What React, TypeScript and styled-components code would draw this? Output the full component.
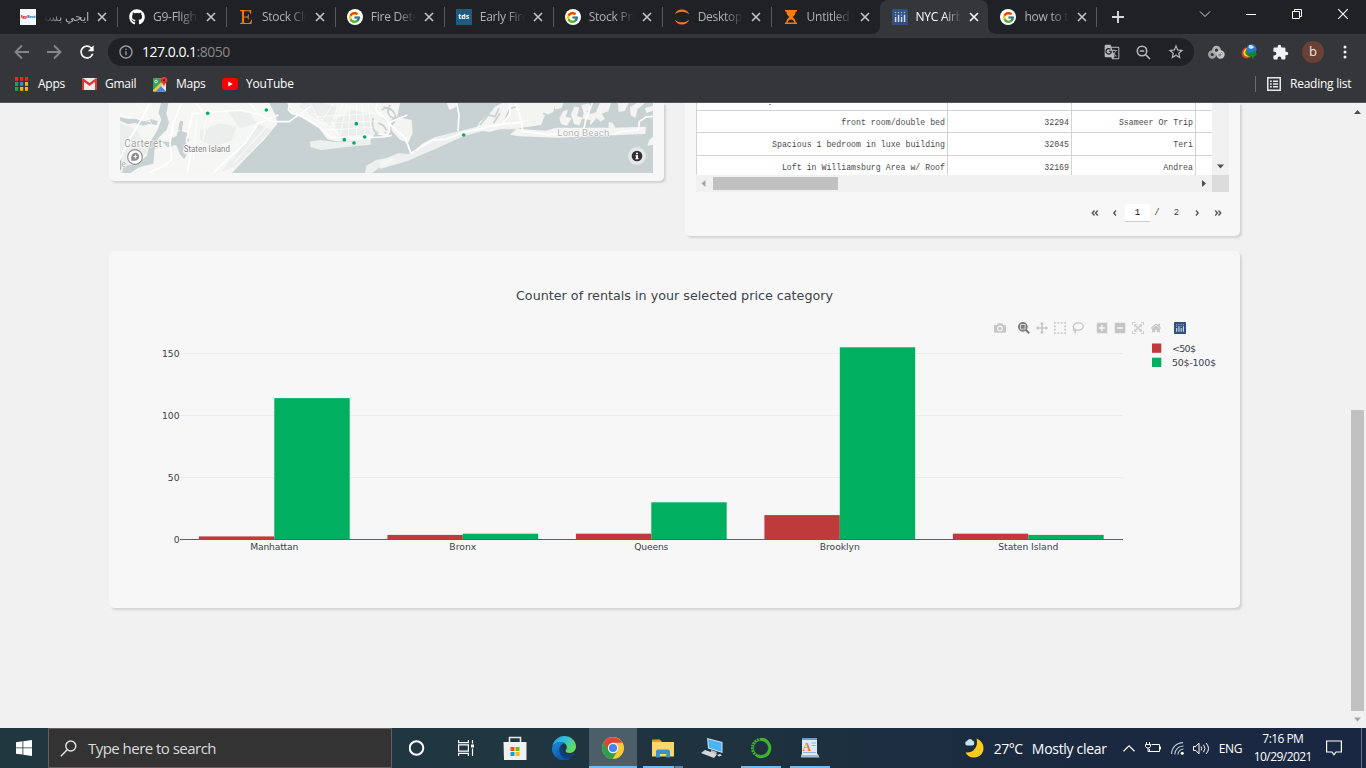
import React from "react";
import styled, { createGlobalStyle } from "styled-components";
import { FaGithub, FaEtsy } from "react-icons/fa";
import { FcGoogle } from "react-icons/fc";
import { MdExtension, MdGTranslate, MdRefresh, MdStarBorder, MdInfoOutline } from "react-icons/md";

const UI = `"Open Sans", "Noto Sans", sans-serif`;

const Global = createGlobalStyle`
  * { box-sizing: border-box; }
  html, body { margin: 0; padding: 0; overflow: hidden; }
  body { font-family: ${UI}; }
  svg { display: block; flex: none; }
`;

const Screen = styled.div`
  width: 1366px;
  height: 768px;
  display: flex;
  flex-direction: column;
  overflow: hidden;
  background: #f1f1f1;
`;

/* ---------- browser chrome ---------- */

const TabStrip = styled.div`
  height: 34px;
  flex: none;
  display: flex;
  padding-left: 8px;
  background: #202124;
`;

const TabBox = styled.div<{ $active?: boolean; $line?: boolean }>`
  width: 108.95px;
  height: 34px;
  position: relative;
  display: flex;
  align-items: center;
  padding-left: 12px;
  background: ${(p) => (p.$active ? "#35363a" : "transparent")};
  border-radius: 8px 8px 0 0;
  &::before {
    content: "";
    display: ${(p) => (p.$line ? "block" : "none")};
    position: absolute;
    left: 0;
    top: 7px;
    width: 1px;
    height: 20px;
    background: #55575b;
  }
`;

const TabFoot = styled.svg<{ $side: "left" | "right" }>`
  position: absolute;
  bottom: 0;
  ${(p) => p.$side}: -8px;
`;

const Favicon = styled.div`
  width: 16px;
  height: 16px;
  display: flex;
  align-items: center;
  justify-content: center;
`;

const GoogleDisc = styled(Favicon)`
  border-radius: 50%;
  background: #fff;
`;

const TdsBadge = styled(Favicon)`
  background: #1e5b7e;
  color: #fff;
  font: 700 7px/16px "Open Sans", sans-serif;
  padding-bottom: 1px;
`;

const EgyBadge = styled(Favicon)`
  background: #f5f6f8;
  color: #e3232f;
  font: 800 4px/16px "Open Sans", sans-serif;
  letter-spacing: -0.2px;
  b {
    color: #2c7fc4;
  }
`;

const TabTitle = styled.div<{ $active?: boolean; $rtl?: boolean }>`
  width: 45px;
  margin-left: 8px;
  height: 20px;
  line-height: 19px;
  font-size: 12px;
  letter-spacing: -0.25px;
  white-space: nowrap;
  overflow: hidden;
  color: ${(p) => (p.$active ? "#fff" : "#aeb1b6")};
  direction: ${(p) => (p.$rtl ? "rtl" : "ltr")};
  mask-image: linear-gradient(to ${(p) => (p.$rtl ? "left" : "right")}, #000 60%, transparent 100%);
`;

const TabClose = styled.div`
  margin-left: 8px;
`;

const NewTab = styled.div<{ $w: number }>`
  width: ${(p) => p.$w}px;
  height: 34px;
  position: relative;
  display: flex;
  align-items: center;
  padding-left: 15px;
  &::before {
    content: "";
    position: absolute;
    left: -1.500px;
    top: 7px;
    width: 1px;
    height: 20px;
    background: #55575b;
  }
`;

const WindowButtons = styled.div`
  height: 28px;
  display: flex;
  align-items: center;
`;

const WindowButton = styled.div`
  width: 46px;
  display: flex;
  justify-content: center;
`;

const Toolbar = styled.div`
  height: 36px;
  flex: none;
  display: flex;
  align-items: center;
  padding-left: 13px;
  background: #35363a;
`;

const NavButton = styled.div`
  width: 32px;
  display: flex;
  align-items: center;
`;

const Omnibox = styled.div`
  width: 1086px;
  height: 28px;
  margin-left: -1px;
  border-radius: 14px;
  background: #202124;
  display: flex;
  align-items: center;
  padding: 0 9px 0 10px;
  color: #9aa0a6;
`;

const Address = styled.div`
  flex: 1;
  margin-left: 8px;
  font-size: 14px;
  line-height: 20px;
  letter-spacing: -0.5px;
  color: #85898e;
  span {
    color: #fff;
  }
`;

const OmniIcons = styled.div`
  display: flex;
  gap: 16px;
  align-items: center;
  color: #b5b8bc;
`;

const ExtIcons = styled.div`
  display: flex;
  align-items: center;
  margin-left: 14px;
  gap: 15.700px;
`;

const Avatar = styled.div`
  width: 22px;
  height: 22px;
  margin: 0 -3px;
  border-radius: 50%;
  background: #6b4036;
  color: #f0e8e6;
  font-size: 13px;
  line-height: 20px;
  text-align: center;
`;

const Bookmarks = styled.div`
  height: 33px;
  flex: none;
  display: flex;
  align-items: center;
  padding: 0 14px 4px 15px;
  background: #35363a;
  border-bottom: 1px solid #56575b;
  color: #fff;
`;

const Bookmark = styled.div<{ $w: number; $gap: number }>`
  width: ${(p) => p.$w}px;
  display: flex;
  align-items: center;
  gap: ${(p) => p.$gap}px;
  font-size: 12px;
  line-height: 16px;
  letter-spacing: -0.24px;
  white-space: nowrap;
`;

const ReadingList = styled(Bookmark)`
  margin-left: auto;
  padding-left: 11px;
  border-left: 1px solid #6a6b6f;
`;

/* ---------- page ---------- */

const Viewport = styled.div`
  height: 625px;
  flex: none;
  display: flex;
  overflow: hidden;
`;

const Page = styled.div`
  flex: 1;
  padding-left: 109px;
  background: #f1f1f1;
`;

const TopRow = styled.div`
  display: flex;
  align-items: flex-start;
  gap: 21px;
  height: 148px;
`;

const Card = styled.div<{ $w: number; $h: number; $cut?: boolean }>`
  position: relative;
  width: ${(p) => p.$w}px;
  height: ${(p) => p.$h}px;
  background: #f7f7f7;
  border-radius: ${(p) => (p.$cut ? "0 0 5px 5px" : "5px")};
  box-shadow: 2px 2px 2px lightgrey;
`;

const MapCard = styled(Card)`
  padding-left: 11px;
`;

const TableCard = styled(Card)`
  padding-left: 11px;
`;

const TableFrame = styled.div`
  width: 533px;
  height: 89px;
  display: grid;
  grid-template-columns: 516px 17px;
  grid-template-rows: 72px 17px;
`;

const Rows = styled.div`
  overflow: hidden;
  background: #fff;
`;

const Row = styled.div<{ $h: number }>`
  display: grid;
  grid-template-columns: 252px 124px 124px 16px;
  height: ${(p) => p.$h}px;
  border-bottom: 1px solid #d3d3d3;
`;

const Cell = styled.div<{ $first?: boolean }>`
  border-right: 1px solid #d3d3d3;
  border-left: ${(p) => (p.$first ? "1px solid #d3d3d3" : "0")};
  padding: 2px 2px 0 0;
  display: flex;
  align-items: center;
  justify-content: flex-end;
  white-space: nowrap;
  font: 8.24px/10px "Liberation Mono", monospace;
  color: #4a4a4a;
  &:last-child {
    border-right: 0;
  }
`;

const Descender = styled.div`
  width: 2px;
  height: 1px;
  margin: -6px 174px 0 0;
  background: #8d8d8d;
`;

const ScrollV = styled.div`
  background: #f1f1f1;
  display: flex;
  justify-content: center;
  align-items: flex-end;
  padding-bottom: 5px;
`;

const ScrollH = styled.div`
  background: #f1f1f1;
  display: flex;
  align-items: center;
  padding: 0 5px 0 4px;
`;

const ThumbH = styled.div`
  width: 125px;
  height: 13px;
  margin-left: 6px;
  margin-right: auto;
  background: #c1c1c1;
`;

const Corner = styled.div`
  background: #dcdcdc;
`;

const Pager = styled.div`
  display: flex;
  align-items: center;
  margin-top: 12px;
  padding-left: 394px;
  font: 9px/18px "Liberation Mono", monospace;
  color: #444;
`;

const PagerItem = styled.div<{ $w: number; $box?: boolean }>`
  width: ${(p) => p.$w}px;
  height: 18px;
  display: flex;
  justify-content: center;
  align-items: center;
  background: ${(p) => (p.$box ? "#fff" : "transparent")};
  border-bottom: ${(p) => (p.$box ? "1px solid #ccc" : "0")};
  border-radius: ${(p) => (p.$box ? "3px 3px 0 0" : "0")};
  color: ${(p) => (p.$box ? "#111" : "#444")};
`;

const ModeBar = styled.div`
  position: absolute;
  left: 885px;
  top: 71px;
  display: flex;
  height: 12px;
`;

const ModeGroup = styled.div`
  display: flex;
  gap: 6px;
  margin-right: 12px;
`;

const PageScroll = styled.div`
  width: 17px;
  background: #f1f1f1;
  display: flex;
  flex-direction: column;
  align-items: center;
  padding: 5px 0;
`;

const PageThumb = styled.div`
  width: 13px;
  height: 301px;
  margin-top: auto;
  margin-bottom: 5px;
  background: #c1c1c1;
`;

/* ---------- taskbar ---------- */

const Taskbar = styled.div`
  height: 40px;
  flex: none;
  display: flex;
  background: linear-gradient(90deg, #21373f 0%, #203640 35%, #1d303f 60%, #1a2840 82%, #1a2743 100%);
  color: #fff;
`;

const StartButton = styled.div`
  width: 48px;
  display: flex;
  align-items: center;
  justify-content: center;
`;

const SearchBox = styled.div`
  width: 344px;
  border: 1px solid #655f5f;
  background: #333;
  display: flex;
  align-items: center;
  padding-left: 11px;
  gap: 11px;
  color: #dcdcdc;
  font-size: 15px;
  letter-spacing: -0.53px;
`;

const TaskButton = styled.div<{ $on?: boolean; $line?: number }>`
  width: 48px;
  margin-left: 1.1px;
  display: flex;
  align-items: center;
  justify-content: center;
  position: relative;
  background: ${(p) => (p.$on ? "#4c5e67" : "transparent")};
  &::after {
    content: "";
    position: absolute;
    bottom: 0;
    height: 2px;
    width: ${(p) => p.$line ?? 0}px;
    background: #76b9ed;
  }
`;

const StackedButton = styled(TaskButton)`
  &::after {
    background: linear-gradient(90deg, #76b9ed 31px, #34556e 31px, #34556e 32px, #5887ad 32px);
  }
`;

const Tray = styled.div`
  flex: 1;
  display: flex;
  align-items: center;
  padding-left: 128px;
`;

const TrayText = styled.div<{ $w: number; $size: number; $ls: number; $indent?: number }>`
  width: ${(p) => p.$w}px;
  margin-left: ${(p) => p.$indent ?? 0}px;
  font-size: ${(p) => p.$size}px;
  letter-spacing: ${(p) => p.$ls}px;
  white-space: nowrap;
`;

const TrayIcon = styled.div<{ $w: number }>`
  width: ${(p) => p.$w}px;
  display: flex;
  justify-content: center;
`;

const Clock = styled.div`
  width: 70px;
  font-size: 12px;
  line-height: 18px;
  letter-spacing: -0.55px;
  text-align: center;
`;

const ShowDesktop = styled.div`
  width: 5px;
  height: 40px;
  margin-left: auto;
  border-left: 1px solid #68718a;
`;

/* ---------- drawings ---------- */

const Cross = ({ s, c, w }: { s: number; c: string; w: number }) => (
  <svg width={s} height={s} viewBox="0 0 10 10" stroke={c} strokeWidth={w}>
    <path d="M1 1L9 9M9 1L1 9" />
  </svg>
);

const Arrow = ({ dir, c }: { dir: "up" | "down" | "left" | "right"; c: string }) => {
  const d = { up: "M0 6L3.5 2L7 6z", down: "M0 1.500L3.500 5.500L7 1.500z", left: "M5.5 0L1.500 3.500L5.500 7z", right: "M2 0L6 3.500L2 7z" }[dir];
  return (
    <svg width="7" height="7" viewBox="0 0 7 7">
      <path d={d} fill={c} />
    </svg>
  );
};

const GoogleIcon = () => (
  <GoogleDisc>
    <FcGoogle size={13} />
  </GoogleDisc>
);

const JupyterIcon = () => (
  <svg width="16" height="16" viewBox="0 0 16 16" fill="#f37726">
    <path d="M.8 5.500C1.800 2.300 4.700.5 8 .5s6.200 1.800 7.200 5C13.400 3.500 10.800 2.700 8 2.700S2.600 3.500.8 5.500z" />
    <path d="M.8 10.500c1 3.200 3.900 5 7.200 5s6.200-1.800 7.200-5c-1.800 2-4.400 2.800-7.200 2.800S2.600 12.500.8 10.500z" />
  </svg>
);

const HourglassIcon = () => (
  <svg width="16" height="16" viewBox="0 0 16 16" fill="#ff7a0f">
    <path d="M2 1h12v1.400H2zM2 13.600h12V15H2zM3.300 2.400h9.400c0 2.700-1.500 4.300-3.200 5.600 1.700 1.300 3.200 2.900 3.200 5.600h-1.300c-.3-1.800-1.500-3-3.400-3.200-1.900.2-3.100 1.400-3.400 3.200H3.300c0-2.700 1.500-4.300 3.200-5.600-1.700-1.300-3.200-2.900-3.200-5.600z" />
  </svg>
);

const PlotlyIcon = ({ s }: { s: number }) => (
  <svg width={s} height={s} viewBox="0 0 16 16">
    <rect width="16" height="16" rx="1" fill="#34507e" />
    <g fill="#7fc0d3">
      <circle cx="3.500" cy="3.500" r=".8" /><circle cx="6.500" cy="3.500" r=".8" /><circle cx="9.500" cy="3.500" r=".8" /><circle cx="12.500" cy="3.500" r=".8" />
      <circle cx="3.500" cy="6" r=".8" /><circle cx="9.500" cy="6" r=".8" />
    </g>
    <path d="M2.800 8h1.500v5H2.800zM5.800 5.800h1.500V13H5.800zM8.800 8h1.500v5H8.800zM11.800 5.800h1.500V13h-1.500z" fill="#d3dceb" />
  </svg>
);

type TabInfo = { title: string; icon: React.ReactNode; active?: boolean; rtl?: boolean; line?: boolean };

const tabs: TabInfo[] = [
  { title: "ايجي بست", icon: <EgyBadge>Egy<b>Best</b></EgyBadge>, rtl: true },
  { title: "G9-Flight", icon: <FaGithub size={16} color="#fff" />, line: true },
  { title: "Stock Clos", icon: <FaEtsy size={16} color="#f0760f" />, line: true },
  { title: "Fire Detec", icon: <GoogleIcon />, line: true },
  { title: "Early Fire", icon: <TdsBadge>tds</TdsBadge>, line: true },
  { title: "Stock Pric", icon: <GoogleIcon />, line: true },
  { title: "Desktop/", icon: <JupyterIcon />, line: true },
  { title: "Untitled", icon: <HourglassIcon />, line: true },
  { title: "NYC Airbn", icon: <PlotlyIcon s={16} />, active: true },
  { title: "how to ta", icon: <GoogleIcon /> },
];

const Tab = ({ t }: { t: TabInfo }) => (
  <TabBox $active={t.active} $line={t.line}>
    {t.active && (
      <>
        <TabFoot $side="left" width="8" height="8"><path d="M8 0v8H0a8 8 0 0 0 8-8z" fill="#35363a" /></TabFoot>
        <TabFoot $side="right" width="8" height="8"><path d="M0 0v8h8a8 8 0 0 1-8-8z" fill="#35363a" /></TabFoot>
      </>
    )}
    <Favicon>{t.icon}</Favicon>
    <TabTitle $active={t.active} $rtl={t.rtl}>{t.title}</TabTitle>
    <TabClose><Cross s={10} c={t.active ? "#fff" : "#c3c5c9"} w={1.6} /></TabClose>
  </TabBox>
);

const BackArrow = ({ flip }: { flip?: boolean }) => (
  <svg width="18" height="16" viewBox="0 0 18 16" fill="none" stroke="#85868a" strokeWidth="1.9" transform={flip ? "scale(-1 1)" : undefined}>
    <path d="M16 8H3M9 1.500L2.500 8L9 14.500" />
  </svg>
);

const ZoomOutIcon = () => (
  <svg width="15" height="15" viewBox="0 0 15 15" fill="none" stroke="#b5b8bc" strokeWidth="1.600">
    <circle cx="6" cy="6" r="4.700" />
    <path d="M9.500 9.500L14 14M3.800 6h4.400" />
  </svg>
);

const AppsIcon = () => {
  const colors = ["#f0281c", "#f0281c", "#f0281c", "#25a35a", "#3a86f0", "#fbb30c", "#25a35a", "#fbb30c", "#fbb30c"];
  return (
    <svg width="13" height="14" viewBox="0 0 13 14">
      {colors.map((c, i) => (
        <rect key={i} x={(i % 3) * 5} y={Math.floor(i / 3) * 5} width="3.200" height="3.800" fill={c} />
      ))}
    </svg>
  );
};

const GmailIcon = () => (
  <svg width="15" height="12" viewBox="0 0 15 12">
    <rect width="15" height="12" rx="1" fill="#ececec" />
    <path d="M0 1v11h2V3.700L7.500 8 13 3.700V12h2V1C15 .3 14 0 13.500.4L7.500 5 1.500.4C1 0 0 .3 0 1z" fill="#e0382d" />
  </svg>
);

const MapsIcon = () => (
  <svg width="15" height="15" viewBox="0 0 15 15">
    <rect y="1.500" width="13" height="13" rx="1" fill="#e8e8e8" />
    <path d="M0 2.500a1 1 0 0 1 1-1h8v4L1.500 13 0 13z" fill="#2fa45a" />
    <path d="M1 14.500L7 8l6 6.500z" fill="#4a86ef" />
    <path d="M0 13l8-7.500 1.600 2L2.500 14.500H1a1 1 0 0 1-1-1z" fill="#f7c62f" />
    <circle cx="3" cy="4.500" r="1.300" fill="none" stroke="#fff" strokeWidth=".8" />
    <path d="M11 0a3.300 3.300 0 0 1 3.300 3.300C14.300 5.700 11.800 6 11 10c-.8-4-3.300-4.300-3.300-6.700A3.300 3.300 0 0 1 11 0z" fill="#e8392f" />
    <circle cx="11" cy="3.300" r="1.200" fill="#7d1410" />
  </svg>
);

const YoutubeIcon = () => (
  <svg width="16" height="12" viewBox="0 0 16 12">
    <rect width="16" height="12" rx="3" fill="#f00" />
    <path d="M6.300 3.500v5L10.700 6z" fill="#fff" />
  </svg>
);

const ReadingIcon = () => (
  <svg width="14" height="14" viewBox="0 0 14 14" fill="none" stroke="#e8eaed" strokeWidth="1.500">
    <rect x=".75" y=".75" width="12.500" height="12.500" />
    <path d="M3 4.200h1.800M3 7h1.800M3 9.800h1.800M6 4.200h5M6 7h5M6 9.800h5" strokeWidth="1.600" />
  </svg>
);

const LinksIcon = () => (
  <svg width="17" height="15" viewBox="0 0 17 15" fill="none">
    <circle cx="4.200" cy="9.500" r="2.900" stroke="#a0a0a0" strokeWidth="2.600" />
    <circle cx="8.500" cy="5.200" r="3" stroke="#b0b0b0" strokeWidth="2.800" />
    <circle cx="12.500" cy="9.500" r="3.300" fill="#8b8b8b" stroke="#c9c9c9" strokeWidth="1.800" />
    <path d="M10.800 8.500q2-1.500 3.200.5t-1.500 2.500" stroke="#dedede" strokeWidth="1" />
  </svg>
);

const IdmIcon = () => (
  <svg width="16" height="16" viewBox="0 0 16 16">
    <path d="M5 3C-1 6-1 14 6 14.500l4-1.500-2-2C5 11.500 3.500 9 6 5z" fill="#d8402a" />
    <path d="M5.500 4C1 7 1.500 12.500 7 13l3-1-2-2C5.500 10.500 4.500 8.500 6.500 5.500z" fill="#f5d91e" />
    <path d="M6 5C3 8 4 11.500 8 11.500L9 9z" fill="#2b8f3a" />
    <circle cx="10.500" cy="5.300" r="5" fill="#2a78d0" />
    <path d="M8 1.500c2-1 4.500 0 5 2L10.500 5 7.500 4z" fill="#c9e6ff" />
    <path d="M6.500 9l6-1V6l3.500 4-5 5v-2.500L6.500 12.500z" fill="#0f8a28" />
  </svg>
);

/* ---------- map ---------- */

const rentals = [[323, 40], [499, 30], [769, 71], [733, 119], [762, 129], [794, 111], [1091, 105]];

const CoastMap = () => (
  <svg width="533" height="70" viewBox="60 9 1599 210">
    <rect x="60" y="9" width="1599" height="210" fill="#f6f6f4" />
    <g fill="#eceeed">
      <path d="M60 70l50 20 35 60-50 69H60zM300 90l60-20 50 10-15 40-50 20-45-20zM380 30l70 10 20 30-50 15zM470 70l45 20-110 110-40 15 50-70zM600 20l90 60 20-60-40-11h-70zM700 60l60-30 90 20-20 50-110 10z" />
    </g>
    <g fill="#c9d2d3">
      <path d="M508 9h54l12 28 38 20 44 27 26 33 22 6 106-1 15-22 26-11 24-20 15-30-8-30h777v210H396l45-48 50-50 40-48-2-22z" />
      <path d="M183 9h22l-6 32 8 26-7 22-25 25-11 33-4 44-40 10-30 18H66l6-20 44-10 24-22 12-44 22-35 10-30-8-20z" />
      <path d="M60 52l25 5 22-2 20 8 28-5 18 5-3 12-24-3-16 5-25-8-22 3-23-10zM240 62l10 2-5 30 17 5 5 24-14 14-5 20 12 8-8 12-13-15-9-25-18-5-2-16 20-8zM185 124l28 2 8 12-18 4z" />
    </g>
    <g fill="#f4f4f3">
      <path d="M630 125l30-5 40 5 112-3v12l-72 7-78 9-30-8zM795 219l4-22 30-17 28-5 20 0 15 4-30 15-25 10-20 15z" opacity=".85" />
      <path d="M840 185l22-12 32-13 40 2 34-32 38-19 75-18 92-24 68-3 30-9 10 20-30 11-82 0-77 20-78 35-91 40-83 24z" opacity=".85" />
      <path d="M812 9h88l-8 40-20 18-12 42-18 1-8-18-18-10 4-35-12-20z" />
      <path d="M875 82l20-30 40 8 3 40-13 28-24-8-26-28zM1125 90l15-25 30-25 15-20 22-11 160 0-8 28-25 10-10 27-45 8-70 2-40 12z" />
      <path d="M1040 9h32l-4 13-20 8zM1230 104l20-18 88 6 30-9 172 0 98-3-2 22-98 4-170 7-110-4z" />
      <path d="M1362 9l28 0-5 15-20 4zM1378 55l12-22 14-3-7 20 18 4-14 23-18-5zM1413 42l10-22 15 2-7 27 16 3-8 24-17-3zM1444 15l24-5 5 15-14 10 16 8-5 17-23-4 4-17zM1472 43l22-9-8 25-16 17zM1490 30l10-21 33 0-8 25-20 7 10 14-12 10-15-11zM1554 9h32l-12 24-18 3zM1590 22l20-13 25 0-22 18-7 26-14-7zM1635 24l24-7v15l-20 7zM1642 137l6-18 11-9v24zM1526 65l12 4 8 14-20 1z" />
    </g>
    <g fill="none" stroke="#c9d2d3" strokeWidth="5">
      <path d="M820 55q-8 30 10 45 15 12 28-3M835 70q15 0 25 22M845 50l18 15M870 15q-12 15-2 30t20 5" />
      <path d="M845 30q20-15 35 5t-5 25M850 20l22 10M1140 75l25-30 20 5 12-25M1180 70l20-30M1215 60l15-35 20-5M1330 40l20 10-8 22" />
    </g>
    <g fill="none" stroke="#fff" strokeLinejoin="round">
      <path strokeWidth="5" d="M60 175l30-60 30-50 30-56M245 9l-25 60-10 60 5 50-25 20-45 20M262 219l12-70-15-25 18-83 45-3 100-8 60 15 35 20 50 0 40-28 25-18M575 40l30 8 50 30 35 33 70 3 90-3 25-5M570 9l-5 20 12 12M285 9l20 22-2 8M535 45l-60 25-40 60-55 50-40 39M450 9l20 25M835 9q-10 10-5 25l33 30q12 20 0 40l-30-2M862 70l60-25M840 38l35 40 40 35 18 47 65-40 40-2 50-20 110-25 60-5 12-5M1070 9l7 35-3 50M1265 72l3 22 80 10 30-5M1245 9l12 30 10 35M1200 78l30-35 0-34M1452 85l5-25 20-51M1540 103l20-8 55-5 3-25 20-14 21-2" />
      <path strokeWidth="2.500" d="M60 45l90 20M110 9l50 70M180 120l60-30M290 60l-10 120M320 40l-10 80M345 40l-25 50M500 80l-100 110M470 70l-75 110" />
      <path strokeWidth="2.500" d="M600 9l120 95M630 9l30 60M650 50l180-10M665 70l165-7M680 90l140-8M660 70l40-60M690 105l40-96M720 108l20-95M745 108l5-95M770 108l0-99M795 108l-10-99M815 100l-10-91" opacity=".8" />
    </g>
    <g fontFamily="Roboto, sans-serif" stroke="#fff" strokeWidth="3" paintOrder="stroke" strokeLinejoin="round">
      <text x="73" y="142" fontSize="30" fill="#a3a3a3" textLength="112">Carteret</text>
      <text x="251" y="155" fontSize="25" fill="#808080" textLength="139" lengthAdjust="spacingAndGlyphs">Staten Island</text>
      <text x="1372" y="108" fontSize="29" fill="#b4b4b4" textLength="156">Long Beach</text>
      <text x="64" y="202" fontSize="27" fill="#aaa">e</text>
    </g>
    <path d="M62 181v28" stroke="#aaa" strokeWidth="3" />
    {rentals.map(([x, y]) => (
      <circle key={x} cx={x} cy={y} r="5.500" fill="#00b060" />
    ))}
    <circle cx="105" cy="171" r="22" fill="#fff" stroke="#8e8e8e" strokeWidth="3.500" />
    <path d="M94 182c-2-13 1-23 12-24 9 0 13 8 11 15-3 8-11 10-23 9z" fill="#8e8e8e" />
    <path d="M106 163l2 5 5 2-5 2-2 5-2-5-5-2 5-2z" fill="#fff" />
    <circle cx="1611" cy="168" r="27" fill="#e4e8e9" />
    <circle cx="1611" cy="168" r="16" fill="#303030" />
    <path d="M1608 158h6v5h-6zM1606 166h8v9h2v3h-10v-3h2v-6h-2z" fill="#fff" />
  </svg>
);

/* ---------- chart ---------- */

const ZERO = 539.5;
const UNIT = 1.24;
const groups = [
  { name: "Manhattan", low: 2.5, mid: 114, w: 48 },
  { name: "Bronx", low: 3.7, mid: 4.7, w: 27 },
  { name: "Queens", low: 4.7, mid: 30, w: 34 },
  { name: "Brooklyn", low: 19.7, mid: 155, w: 40 },
  { name: "Staten Island", low: 4.7, mid: 3.7, w: 60 },
];

const BarChart = () => (
  <svg width="1131" height="357" viewBox="109 251 1131 357" fontFamily={`"DejaVu Sans", sans-serif`} fill="#3b434c">
    <text x="516" y="300" fontSize="12.700" textLength="317">Counter of rentals in your selected price category</text>
    {[50, 100, 150].map((v) => (
      <rect key={v} x="180" y={Math.round(ZERO - v * UNIT - 0.5)} width="943" height="1" fill="#ebebeb" />
    ))}
    {groups.map((g, i) => {
      const x = 198.900 + i * 188.500;
      return (
        <g key={g.name}>
          <rect x={x} y={ZERO - g.low * UNIT} width="75.400" height={g.low * UNIT} fill="#bf3b3b" />
          <rect x={x + 75.400} y={ZERO - g.mid * UNIT} width="75.400" height={g.mid * UNIT} fill="#00b060" />
          <text x={x + 75.400 - g.w / 2} y="550" fontSize="9.200" textLength={g.w}>{g.name}</text>
        </g>
      );
    })}
    <rect x="180" y="539" width="943" height="1" fill="#5c6166" />
    {[0, 50, 100, 150].map((v) => (
      <text key={v} x="179.500" y={ZERO - v * UNIT + 3.500} fontSize="9.200" textAnchor="end">{v}</text>
    ))}
    <rect x="1152" y="343.500" width="9.300" height="9.300" fill="#bf3b3b" />
    <rect x="1152" y="357.700" width="9.300" height="9.300" fill="#00b060" />
    <text x="1172" y="352" fontSize="9.500" textLength="24">{"<50$"}</text>
    <text x="1172" y="366" fontSize="9.500" textLength="44">50$-100$</text>
  </svg>
);

const modePaths = {
  camera: "m500 450c-83 0-150-67-150-150 0-83 67-150 150-150 83 0 150 67 150 150 0 83-67 150-150 150z m400 150h-120c-16 0-34 13-39 29l-31 93c-6 15-23 28-40 28h-340c-16 0-34-13-39-28l-31-94c-6-15-23-28-40-28h-120c-55 0-100-45-100-100v-450c0-55 45-100 100-100h800c55 0 100 45 100 100v450c0 55-45 100-100 100z m-400-550c-138 0-250 112-250 250 0 138 112 250 250 250 138 0 250-112 250-250 0-138-112-250-250-250z m365 380c-19 0-35 16-35 35 0 19 16 35 35 35 19 0 35-16 35-35 0-19-16-35-35-35z",
  zoom: "m1000-25l-250 251c40 63 63 138 63 218 0 224-182 406-407 406-224 0-406-182-406-406s183-406 407-406c80 0 155 22 218 62l250-250 125 125z m-812 250l0 438 437 0 0-438-437 0z m62 375l313 0 0-312-313 0 0 312z",
  pan: "m1000 350l-187 188 0-125-250 0 0 250 125 0-188 187-187-187 125 0 0-250-250 0 0 125-188-188 186-187 0 125 252 0 0-250-125 0 187-188 188 188-125 0 0 250 250 0 0-126 187 188z",
  box: "m0 850l0-143 143 0 0 143-143 0z m286 0l0-143 143 0 0 143-143 0z m285 0l0-143 143 0 0 143-143 0z m286 0l0-143 143 0 0 143-143 0z m-857-286l0-143 143 0 0 143-143 0z m857 0l0-143 143 0 0 143-143 0z m-857-285l0-143 143 0 0 143-143 0z m857 0l0-143 143 0 0 143-143 0z m-857-286l0-143 143 0 0 143-143 0z m286 0l0-143 143 0 0 143-143 0z m285 0l0-143 143 0 0 143-143 0z m286 0l0-143 143 0 0 143-143 0z",
  plus: "m1 787l0-875 875 0 0 875-875 0z m687-500l-187 0 0-187-125 0 0 187-188 0 0 125 188 0 0 187 125 0 0-187 187 0 0-125z",
  minus: "m0 788l0-876 875 0 0 876-875 0z m688-500l-500 0 0 125 500 0 0-125z",
  auto: "m250 850l-187 0-63 0 0-62 0-188 63 0 0 188 187 0 0 62z m688 0l-188 0 0-62 188 0 0-188 62 0 0 188 0 62-62 0z m-875-938l0 188-63 0 0-188 0-62 63 0 187 0 0 62-187 0z m875 188l0-188-188 0 0-62 188 0 62 0 0 62 0 188-62 0z m-125 188l-1 0-93-94-156 156 156 156 92-93 2 0 0 250-250 0 0-2 93-92-156-156-156 156 94 92 0 2-250 0 0-250 0 0 93 93 157-156-157-156-93 94 0 0 0-250 250 0 0 0-94 93 156 157 156-157-93-93 0 0 250 0 0 250z",
  home: "m786 296v-267q0-15-11-26t-25-10h-214v214h-143v-214h-214q-15 0-25 10t-11 26v267q0 1 0 2t0 2l321 264 321-264q1-1 1-4z m124 39l-34-41q-5-5-12-6h-2q-7 0-12 3l-386 322-386-322q-7-4-13-4-7 2-12 7l-35 41q-4 5-3 13t6 12l401 334q18 15 42 15t43-15l136-114v109q0 8 5 13t13 5h107q8 0 13-5t5-13v-227l122-102q5-5 6-12t-4-13z",
};

const ModeIcon = ({ d, w = 1000, on }: { d: string; w?: number; on?: boolean }) => (
  <svg width="12" height="12" viewBox={`0 0 ${w} 1000`}>
    <path d={d} transform="matrix(1 0 0 -1 0 850)" fill={on ? "#7c7c7c" : "#c6c6c6"} />
  </svg>
);

const LassoIcon = () => (
  <svg width="12" height="12" viewBox="0 0 12 12" fill="none" stroke="#c6c6c6" strokeWidth="1.300">
    <ellipse cx="6.300" cy="4.500" rx="5" ry="3.600" />
    <path d="M1.600 6.200q-1 2 .8 2.300t2-1M2.400 8.500q1.600 1 .4 3" />
  </svg>
);

/* ---------- taskbar drawings ---------- */

const StoreIcon = () => (
  <svg width="24" height="26" viewBox="0 0 24 26">
    <path d="M6.500 8V2.500h11V8" fill="none" stroke="#e9e9e9" strokeWidth="1.600" />
    <path d="M.5 7h23v18H1z" fill="#f0f0f0" />
    <path d="M7.500 12h4v4h-4z" fill="#f25022" /><path d="M12.500 12h4v4h-4z" fill="#7fba00" />
    <path d="M7.500 17h4v4h-4z" fill="#00a4ef" /><path d="M12.500 17h4v4h-4z" fill="#ffb900" />
  </svg>
);

const EdgeIcon = () => (
  <svg width="24" height="24" viewBox="0 0 24 24">
    <defs>
      <linearGradient id="edgeTop" x1="0" y1="0" x2="1" y2=".5"><stop offset="0" stopColor="#1f9de0" /><stop offset=".5" stopColor="#30bde0" /><stop offset="1" stopColor="#66dc58" /></linearGradient>
      <linearGradient id="edgeLow" x1="0" y1="0" x2=".6" y2="1"><stop offset="0" stopColor="#1a8ede" /><stop offset="1" stopColor="#0c4f9e" /></linearGradient>
    </defs>
    <path d="M.2 11C1.500 4 6.500 0 12 0c7 0 12 5 12 10.500 0 4-3 6.500-6.500 6.500-2.500 0-4-1-4-2 0-.7 1.300-1.500 1.300-3.800C14.800 8.500 12 6 8.500 6 4.500 6 1.500 8.500.2 11z" fill="url(#edgeTop)" />
    <path d="M0 12.500C1 8.500 4.500 6 8.500 6c1.500 0 3 .5 4 1.300C9 8 7.500 11 7.500 14c0 5 4 8.500 9 8.500 1 0 2 0 2.500-.3A12 12 0 0 1 0 12.500z" fill="url(#edgeLow)" />
    <path d="M9.500 9.500C7.500 11 7.300 13 7.500 15c.5 5 5 8 10.500 7 2-.9 3.800-2.500 4.800-4.300.2-.5-.3-.8-.8-.5-5 2.500-11.500.8-11.500-4.700 0-1.500.4-2.500-1-3z" fill="#123f7c" />
  </svg>
);

const ChromeIcon = () => (
  <svg width="22" height="22" viewBox="0 0 22 22">
    <circle cx="11" cy="11" r="11" fill="#fbc934" />
    <path d="M11 11L1.470 5.500a11 11 0 0 0 9.300 16.500L15.500 13.500z" fill="#2da04c" />
    <path d="M1.470 5.500A11 11 0 0 1 20.500 5.800H11L6.300 13.500z" fill="#e0433a" />
    <circle cx="11" cy="11" r="5.200" fill="#fff" />
    <circle cx="11" cy="11" r="4.100" fill="#4285f4" />
  </svg>
);

const FolderIcon = () => (
  <svg width="22" height="19" viewBox="0 0 22 19">
    <path d="M0 1.500C0 .8.500.5 1 .5h7l2 2.500H0z" fill="#e0a01e" />
    <path d="M0 3h22v14.500H0z" fill="#fbd668" />
    <path d="M4 18.500V12l1.500-1.500h11L18 12v6.500h-3.800v-3.500H7.800v3.500z" fill="#3d8fd1" />
  </svg>
);

const PcIcon = () => (
  <svg width="24" height="22" viewBox="0 0 24 22">
    <path d="M7 1l15.500 4v11L8 11.500z" fill="#d5e3ea" /><path d="M8 2.200l13.500 3.500v9L9 10.800z" fill="#48b3f5" />
    <path d="M11 13l6 2-1 2-5-1z" fill="#b8c0c4" /><path d="M1 16l4-3 12 4-3 4z" fill="#d4d8da" /><path d="M17 18l3-1 2 1.500-3 1z" fill="#d4d8da" />
  </svg>
);

const AnacondaIcon = () => (
  <svg width="22" height="22" viewBox="0 0 22 22" fill="none" stroke="#3fb52c">
    <path d="M11 2.200a8.800 8.800 0 1 1-4 16.600" strokeWidth="2.800" />
    <path d="M7 18.800A8.800 8.800 0 0 1 11 2.200" strokeWidth="2.600" strokeDasharray="1.800 .9" />
    <circle cx="11" cy="11" r="7.500" strokeWidth=".7" />
  </svg>
);

const WordpadIcon = () => (
  <svg width="20" height="22" viewBox="0 0 20 22">
    <path d="M2 1h15v15l2 4H1l1-4z" fill="#dfe9f3" /><path d="M2 1h15v2H2z" fill="#6f9cc4" />
    <path d="M1.500 18h17l1 2.500H1z" fill="#a9bccd" /><path d="M11.500 6h4.500M11.500 8.500h4.500M3 15.500h13" stroke="#8fb5da" />
    <text x="2.500" y="13.500" fontFamily="Liberation Serif, serif" fontWeight="700" fontSize="12" fill="#ef7d22">A</text>
  </svg>
);

export default function App() {
  return (
    <Screen>
      <Global />
      <TabStrip>
        {tabs.map((t) => <Tab key={t.title} t={t} />)}
        <NewTab $w={84.5}>
          <svg width="12" height="12" viewBox="0 0 12 12" stroke="#d6d8db" strokeWidth="1.900"><path d="M6 0v12M0 6h12" /></svg>
        </NewTab>
        <WindowButtons>
          <WindowButton><svg width="12" height="12" viewBox="0 0 12 12" fill="none" stroke="#d5d5d5"><path d="M1 3.500l5 5 5-5" /></svg></WindowButton>
          <WindowButton><svg width="10" height="10" viewBox="0 0 10 10"><path d="M0 5h10v1H0z" fill="#fff" /></svg></WindowButton>
          <WindowButton><svg width="10" height="10" viewBox="0 0 10 10" fill="none" stroke="#fff"><path d="M.5 2.500h7v7h-7zM2.500 2.500v-2h7v7h-2" /></svg></WindowButton>
          <WindowButton><Cross s={12} c="#fff" w={0.9} /></WindowButton>
        </WindowButtons>
      </TabStrip>

      <Toolbar>
        <NavButton><BackArrow /></NavButton>
        <NavButton><BackArrow flip /></NavButton>
        <NavButton><MdRefresh size={20} color="#fff" /></NavButton>
        <Omnibox>
          <MdInfoOutline size={16} />
          <Address><span>127.0.0.1</span>:8050</Address>
          <OmniIcons>
            <MdGTranslate size={16} /><ZoomOutIcon /><MdStarBorder size={18} />
          </OmniIcons>
        </Omnibox>
        <ExtIcons>
          <LinksIcon /><IdmIcon /><MdExtension size={17} color="#f1f3f4" /><Avatar>b</Avatar>
          <svg width="16" height="16" viewBox="0 0 16 16" fill="#f1f3f4"><circle cx="8" cy="3" r="1.500" /><circle cx="8" cy="8" r="1.500" /><circle cx="8" cy="13" r="1.500" /></svg>
        </ExtIcons>
      </Toolbar>

      <Bookmarks>
        <Bookmark $w={67} $gap={10}><AppsIcon />Apps</Bookmark>
        <Bookmark $w={71} $gap={8}><GmailIcon />Gmail</Bookmark>
        <Bookmark $w={69} $gap={8}><MapsIcon />Maps</Bookmark>
        <Bookmark $w={80} $gap={8}><YoutubeIcon />YouTube</Bookmark>
        <ReadingList $w={97} $gap={9}><ReadingIcon />Reading list</ReadingList>
      </Bookmarks>

      <Viewport>
        <Page>
          <TopRow>
            <MapCard $w={555} $h={78} $cut><CoastMap /></MapCard>
            <TableCard $w={555} $h={133} $cut>
              <TableFrame>
                <Rows>
                  <Row $h={8}><Cell $first><Descender /></Cell><Cell /><Cell /><Cell /></Row>
                  <Row $h={22}><Cell $first>front room/double bed</Cell><Cell>32294</Cell><Cell>Ssameer Or Trip</Cell><Cell /></Row>
                  <Row $h={23}><Cell $first>Spacious 1 bedroom in luxe building</Cell><Cell>32045</Cell><Cell>Teri</Cell><Cell /></Row>
                  <Row $h={22}><Cell $first>Loft in Williamsburg Area w/ Roof</Cell><Cell>32169</Cell><Cell>Andrea</Cell><Cell /></Row>
                </Rows>
                <ScrollV><Arrow dir="down" c="#505050" /></ScrollV>
                <ScrollH><Arrow dir="left" c="#a3a3a3" /><ThumbH /><Arrow dir="right" c="#505050" /></ScrollH>
                <Corner />
              </TableFrame>
              <Pager>
                <PagerItem $w={9}><svg width="8" height="8" viewBox="0 0 8 8" fill="none" stroke="#555" strokeWidth="1.400"><path d="M3.500 1.500L1.200 4L3.500 6.500M6.800 1.500L4.500 4L6.800 6.500" /></svg></PagerItem>
                <PagerItem $w={32}><svg width="8" height="8" viewBox="0 0 8 8" fill="none" stroke="#555" strokeWidth="1.400"><path d="M5 1.500L2.800 4L5 6.500" /></svg></PagerItem>
                <PagerItem $w={25} $box style={{ marginLeft: -6 }}>1</PagerItem>
                <PagerItem $w={14}>/</PagerItem>
                <PagerItem $w={25}>2</PagerItem>
                <PagerItem $w={15}><svg width="8" height="8" viewBox="0 0 8 8" fill="none" stroke="#555" strokeWidth="1.400"><path d="M3 1.500L5.200 4L3 6.500" /></svg></PagerItem>
                <PagerItem $w={27}><svg width="8" height="8" viewBox="0 0 8 8" fill="none" stroke="#555" strokeWidth="1.400"><path d="M1.200 1.500L3.500 4L1.200 6.500M4.500 1.500L6.800 4L4.500 6.500" /></svg></PagerItem>
              </Pager>
            </TableCard>
          </TopRow>
          <Card $w={1131} $h={357}>
            <BarChart />
            <ModeBar>
              <ModeGroup><ModeIcon d={modePaths.camera} /></ModeGroup>
              <ModeGroup>
                <ModeIcon d={modePaths.zoom} on /><ModeIcon d={modePaths.pan} /><ModeIcon d={modePaths.box} /><LassoIcon />
              </ModeGroup>
              <ModeGroup>
                <ModeIcon d={modePaths.plus} w={875} /><ModeIcon d={modePaths.minus} w={875} /><ModeIcon d={modePaths.auto} /><ModeIcon d={modePaths.home} w={928.6} />
              </ModeGroup>
              <PlotlyIcon s={12} />
            </ModeBar>
          </Card>
        </Page>
        <PageScroll>
          <Arrow dir="up" c="#505050" />
          <PageThumb />
          <Arrow dir="down" c="#a3a3a3" />
        </PageScroll>
      </Viewport>

      <Taskbar>
        <StartButton>
          <svg width="16" height="16" viewBox="0 0 16 16" fill="#fff"><path d="M0 2.200L6.500 1.300v6.200H0zM7.300 1.200L16 0v7.500H7.300zM0 8.300h6.500v6.300L0 13.700zM7.300 8.300H16V16l-8.700-1.200z" /></svg>
        </StartButton>
        <SearchBox>
          <svg width="17" height="17" viewBox="0 0 17 17" fill="none" stroke="#e4e4e4" strokeWidth="1.400"><circle cx="10.800" cy="6" r="5" /><path d="M7.200 9.700L.8 16.200" /></svg>
          Type here to search
        </SearchBox>
        <TaskButton><svg width="16" height="16" viewBox="0 0 16 16" fill="none" stroke="#fff" strokeWidth="2"><circle cx="7.500" cy="8" r="6.800" /></svg></TaskButton>
        <TaskButton>
          <svg width="16" height="16" viewBox="0 0 16 16" fill="none" stroke="#fff" strokeWidth="1.200"><path d="M.6 0v2.600h9.800V0M.6 16v-2.600h9.800V16M.6 4.900h9.800v6.200H.6zM14.500 0v3.500M14.500 8.500V16" /><path d="M13 4.500h3v3h-3z" fill="#fff" stroke="none" /></svg>
        </TaskButton>
        <TaskButton><StoreIcon /></TaskButton>
        <TaskButton><EdgeIcon /></TaskButton>
        <TaskButton $on $line={48}><ChromeIcon /></TaskButton>
        <StackedButton $line={40}><FolderIcon /></StackedButton>
        <TaskButton><PcIcon /></TaskButton>
        <TaskButton $line={40}><AnacondaIcon /></TaskButton>
        <TaskButton $line={40}><WordpadIcon /></TaskButton>
        <Tray>
          <TrayIcon $w={24}>
            <svg width="20" height="20" viewBox="0 0 20 20"><path d="M12.500.5c4 1.500 7 5 7 9.500 0 5.500-4 9.500-9.500 9.500-4 0-7-2-8.500-5C8 15.500 15 10 12.500.5z" fill="#fccb1b" /><path d="M3 7.500a2.300 2.300 0 0 1 0-4.500 3 3 0 0 1 5.300-.5A2.600 2.600 0 0 1 8.500 7.500z" fill="#c5e2f8" /></svg>
          </TrayIcon>
          <TrayText $w={38} $size={14} $ls={-0.5} $indent={8}>27°C</TrayText>
          <TrayText $w={85} $size={14} $ls={-0.3}>Mostly clear</TrayText>
          <TrayIcon $w={24}><svg width="12" height="7" viewBox="0 0 12 7" fill="none" stroke="#fff" strokeWidth="1.200"><path d="M.5 6.300L6 .9l5.500 5.400" /></svg></TrayIcon>
          <TrayIcon $w={24}><svg width="16" height="12" viewBox="0 0 16 12" fill="none" stroke="#fff"><path d="M6.500 2.500h8v7h-10V7M15.500 4.500v3M1.500 0v2.500M4.500 0v2.500M.5 2.500h5v2L4 6H2L.5 4.500zM3 6v3.500h2" /></svg></TrayIcon>
          <TrayIcon $w={26}><svg width="13" height="13" viewBox="0 0 13 13" fill="none" stroke="#c5cbd5" strokeWidth="1.100"><path d="M.6 12A11.400 11.400 0 0 1 12 .6M3.800 12.500A8.500 8.500 0 0 1 12.500 4M7 12.500A5.500 5.500 0 0 1 12.500 7" /><circle cx="11.300" cy="11.300" r="1.500" fill="#fff" stroke="none" /></svg></TrayIcon>
          <TrayIcon $w={22}><svg width="17" height="13" viewBox="0 0 17 13" fill="none" stroke="#fff"><path d="M.5 4.500h2.300L6 1v11L2.800 8.500H.5zM8 4.500q1.500 2 0 4M10.500 2.800q3 3.700 0 7.400M13 1q5 5.500 0 11" /></svg></TrayIcon>
          <TrayText $w={29} $size={12} $ls={-0.4} $indent={6}>ENG</TrayText>
          <Clock>7:16 PM<br />10/29/2021</Clock>
          <TrayIcon $w={32}><svg width="16" height="16" viewBox="0 0 16 16" fill="none" stroke="#fff" strokeWidth="1.200"><path d="M.6 1h14.800v11H10L8 14.800 6 12H.6z" /></svg></TrayIcon>
          <ShowDesktop />
        </Tray>
      </Taskbar>
    </Screen>
  );
}
